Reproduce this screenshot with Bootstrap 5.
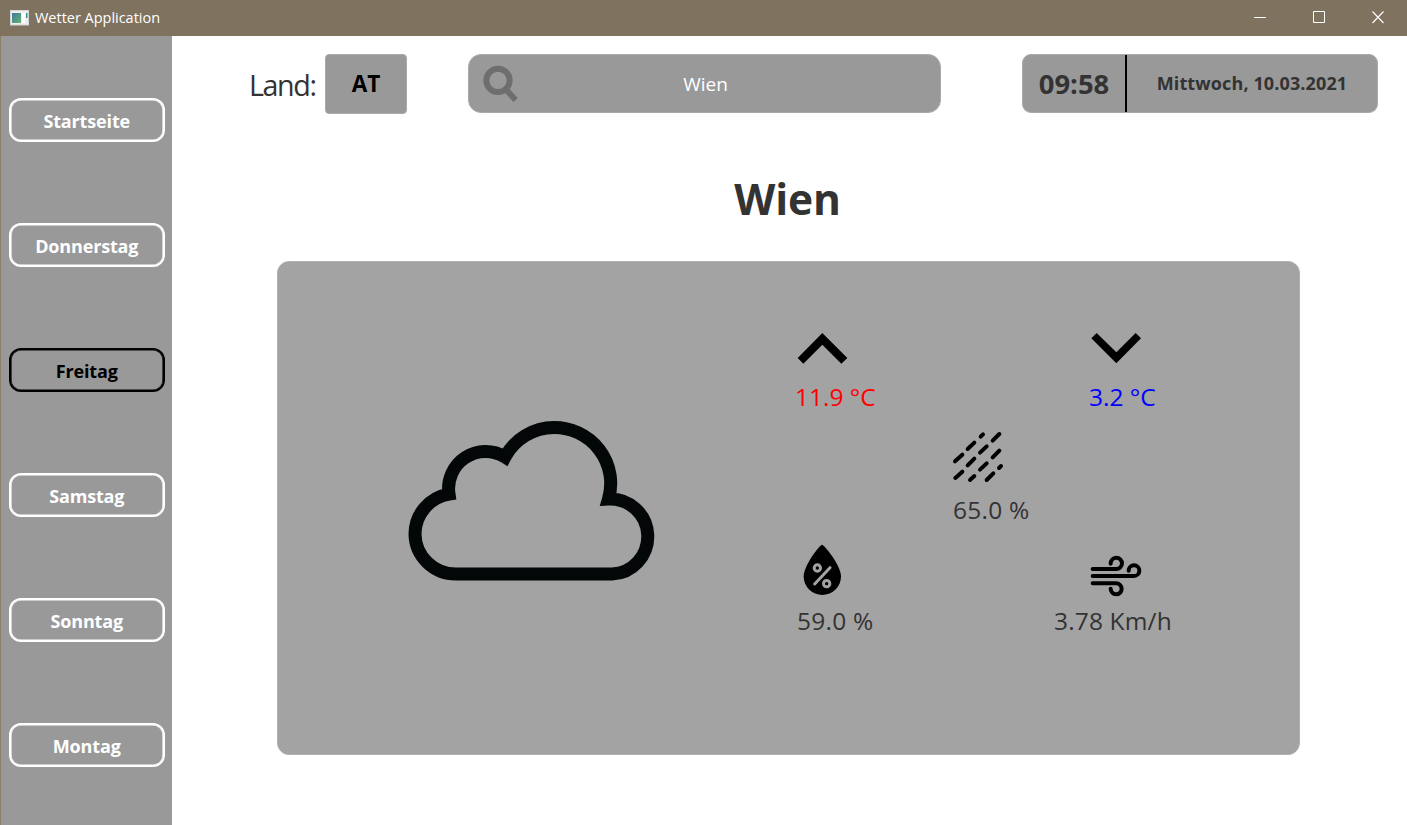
<!DOCTYPE html>
<html lang="de">
<head>
<meta charset="utf-8">
<title>Wetter Application</title>
<link href="https://cdn.jsdelivr.net/npm/bootstrap@5.3.0/dist/css/bootstrap.min.css" rel="stylesheet">
<style>
body{font-family:"Open Sans","Noto Sans",sans-serif;color:#333;height:825px;overflow:hidden;background:#fff}
.titlebar{height:36px;background:#7f735f;color:#fff;font-size:14.5px;padding-left:10px;padding-right:23px}
.app-icon{margin-top:-1px}
.app-title{margin-left:6px;letter-spacing:-.02px;line-height:34px}
.win-btns{gap:46px;margin-top:-2px}
.side{width:172px;background:#999;border-left:1px solid #8b8067;padding:62px 7px 0 7.500px;gap:81px}
.day-btn{height:44px;border:2px solid #fff;box-shadow:inset 0 0 0 .6px #fff;border-radius:12px;color:#fff;font-weight:700;font-size:18px;line-height:40px;padding:1px 0 0;width:156.5px;letter-spacing:-.15px;--bs-btn-hover-color:#fff}
.day-btn.current{border-color:#000;box-shadow:inset 0 0 0 .6px #000;color:#000}
.topbar{padding:18px 29px 0 77px}
.land{font-size:28.7px;line-height:61px;width:76px;letter-spacing:-1.4px}
.combo{width:82px;height:60px;background:#999;border:1px solid #aaa;border-radius:4px;color:#000;font-weight:700;font-size:22.5px;line-height:58px}
.search{width:473px;height:59px;margin-left:61px;background:#999;border:1px solid #aaa;border-radius:13px;color:#fff;font-size:19px;padding:0 14px}
.search span{padding:2px 34px 0 0}
.clock{width:356px;height:59px;background:#999;border:1px solid #aaa;border-radius:9px;font-weight:700}
.time{width:104px;border-right:2px solid #000;font-size:27.4px;line-height:57px}
.date{font-size:18px;line-height:57px;letter-spacing:.12px}
.city{font-size:42.5px;font-weight:700;line-height:60px;margin:54px 0 0;padding-right:4px;letter-spacing:-.2px}
.panel{width:1023px;height:494px;margin:32px 0 0 105px;background:#a3a3a3;border:1px solid #b0b0b0;border-radius:12px}
.cloud{margin:153px 0 0 124px}
.metrics{width:380px;margin:61px 0 0 135px}
.metric{font-size:24.500px;line-height:34px;white-space:nowrap}
.metric svg{display:block;overflow:visible}
.c1{width:294px}
.t-max,.t-min{margin:7px 0 0 -2px}
.t-max{color:#f00}
.t-min{color:#00f}
.rain{margin:18px 0 0 156px}
.t-rain,.t-hum,.t-wind{letter-spacing:.25px}
.t-rain{margin-top:11px}
.rain + .d-flex{margin-top:18px}
.t-hum,.t-wind{margin-top:9px}
.t-wind{margin-left:-37px;letter-spacing:.15px}
</style>
</head>
<body class="d-flex flex-column">
<header class="titlebar d-flex align-items-center flex-shrink-0">
<svg class="app-icon" width="19" height="16" viewBox="0 0 19 16"><defs><linearGradient id="g" x2="1" y2="1"><stop stop-color="#3f78a0"/><stop offset="1" stop-color="#65b36f"/></linearGradient></defs><rect x=".5" y=".5" width="18" height="14.5" fill="#eee" stroke="#d5d3cf"/><rect x="2" y="3" width="9" height="10" fill="url(#g)"/><path d="M12 3h3v10h-3z" fill="#fff"/><path d="M16 3h1.500v5h-1.500z" fill="#3f8f8d"/></svg>
<span class="app-title">Wetter Application</span>
<div class="win-btns d-flex ms-auto">
<svg width="13" height="13" fill="none" stroke="#fff"><path d="M1 6.500h12"/></svg>
<svg width="13" height="13" fill="none" stroke="#fff"><path d="M1.500 .5h11v11h-11z"/></svg>
<svg width="13" height="13" fill="none" stroke="#fff" stroke-width="1.1"><path d="M1.500 .5l11 11.500M12.500 .5l-11 11.500"/></svg>
</div>
</header>
<div class="d-flex flex-grow-1">
<nav class="side d-flex flex-column flex-shrink-0">
<button class="btn day-btn">Startseite</button>
<button class="btn day-btn">Donnerstag</button>
<button class="btn day-btn current">Freitag</button>
<button class="btn day-btn">Samstag</button>
<button class="btn day-btn">Sonntag</button>
<button class="btn day-btn">Montag</button>
</nav>
<main class="flex-grow-1">
<div class="topbar d-flex">
<span class="land">Land:</span>
<div class="combo text-center">AT</div>
<div class="search d-flex align-items-center">
<svg width="36" height="37" viewBox="760 75 108 111" fill="none" stroke="#6e6e6e" stroke-width="18"><circle cx="805" cy="121" r="35"/><path d="M829 149l29 31"/></svg>
<span class="flex-grow-1 text-center">Wien</span>
</div>
<div class="clock d-flex ms-auto text-center"><span class="time">09:58</span><span class="date flex-grow-1">Mittwoch, 10.03.2021</span></div>
</div>
<h1 class="city text-center">Wien</h1>
<section class="panel d-flex">
<svg class="cloud flex-shrink-0" width="260" height="172" viewBox="402 415 260 172" fill="none" stroke="#030707" stroke-width="13"><path d="M456 574A41 40.500 0 0 1 415 534A41 40.500 0 0 1 449 494.100A37 37 0 0 1 505 457A56 56 0 0 1 554 427.500A56.500 56 0 0 1 608.500 499A37.500 37.500 0 0 1 612 574Z"/></svg>
<div class="metrics">
<div class="d-flex">
<div class="metric c1"><svg width="50" height="50" viewBox="51 9 150 150"><path d="M127 39l75 75-18 17-57-57-57 57-17-17z"/></svg><div class="t-max">11.9 °C</div></div>
<div class="metric"><svg width="50" height="50" viewBox="62 9 150 150"><path d="M138 130l74-75-16-16-58 58-59-58-16 16z"/></svg><div class="t-min">3.2 °C</div></div>
</div>
<div class="metric rain"><svg width="50" height="50" viewBox="54 36 150 150" stroke="#000" stroke-width="12" stroke-linecap="round"><path d="M137 50l7-7M173 62l20-20M98 87l20-19M135 98l20-19M60 124l22-20M173 112l20-20M98 136l20-20M135 149l20-19M192 144l6-6M61 174l21-19M105 180l13-12M155 180l20-20"/></svg><div class="t-rain">65.0 %</div></div>
<div class="d-flex">
<div class="metric c1"><svg width="50" height="50" viewBox="51 30 150 150"><path d="M126 29C119 29 71 92 71 124a56 56 0 0 0 112 0C183 92 133 29 126 29z"/><g fill="none" stroke="#a3a3a3" stroke-width="9" stroke-linecap="round"><circle cx="112" cy="99" r="9.500"/><circle cx="140" cy="146" r="9.500"/><path d="M104 147l46-49"/></g></svg><div class="t-hum">59.0 %</div></div>
<div class="metric"><svg width="50" height="50" viewBox="153 15 150 150" fill="none" stroke="#000" stroke-width="12" stroke-linecap="round"><path d="M158 87H228A17 17 0 1 0 212 71M158 108H282A16 16 0 1 0 266 92M158 130H228A16.500 16.500 0 1 1 212 146"/></svg><div class="t-wind">3.78 Km/h</div></div>
</div>
</div>
</section>
</main>
</div>
<script src="https://cdn.jsdelivr.net/npm/bootstrap@5.3.0/dist/js/bootstrap.bundle.min.js"></script>
</body>
</html>
